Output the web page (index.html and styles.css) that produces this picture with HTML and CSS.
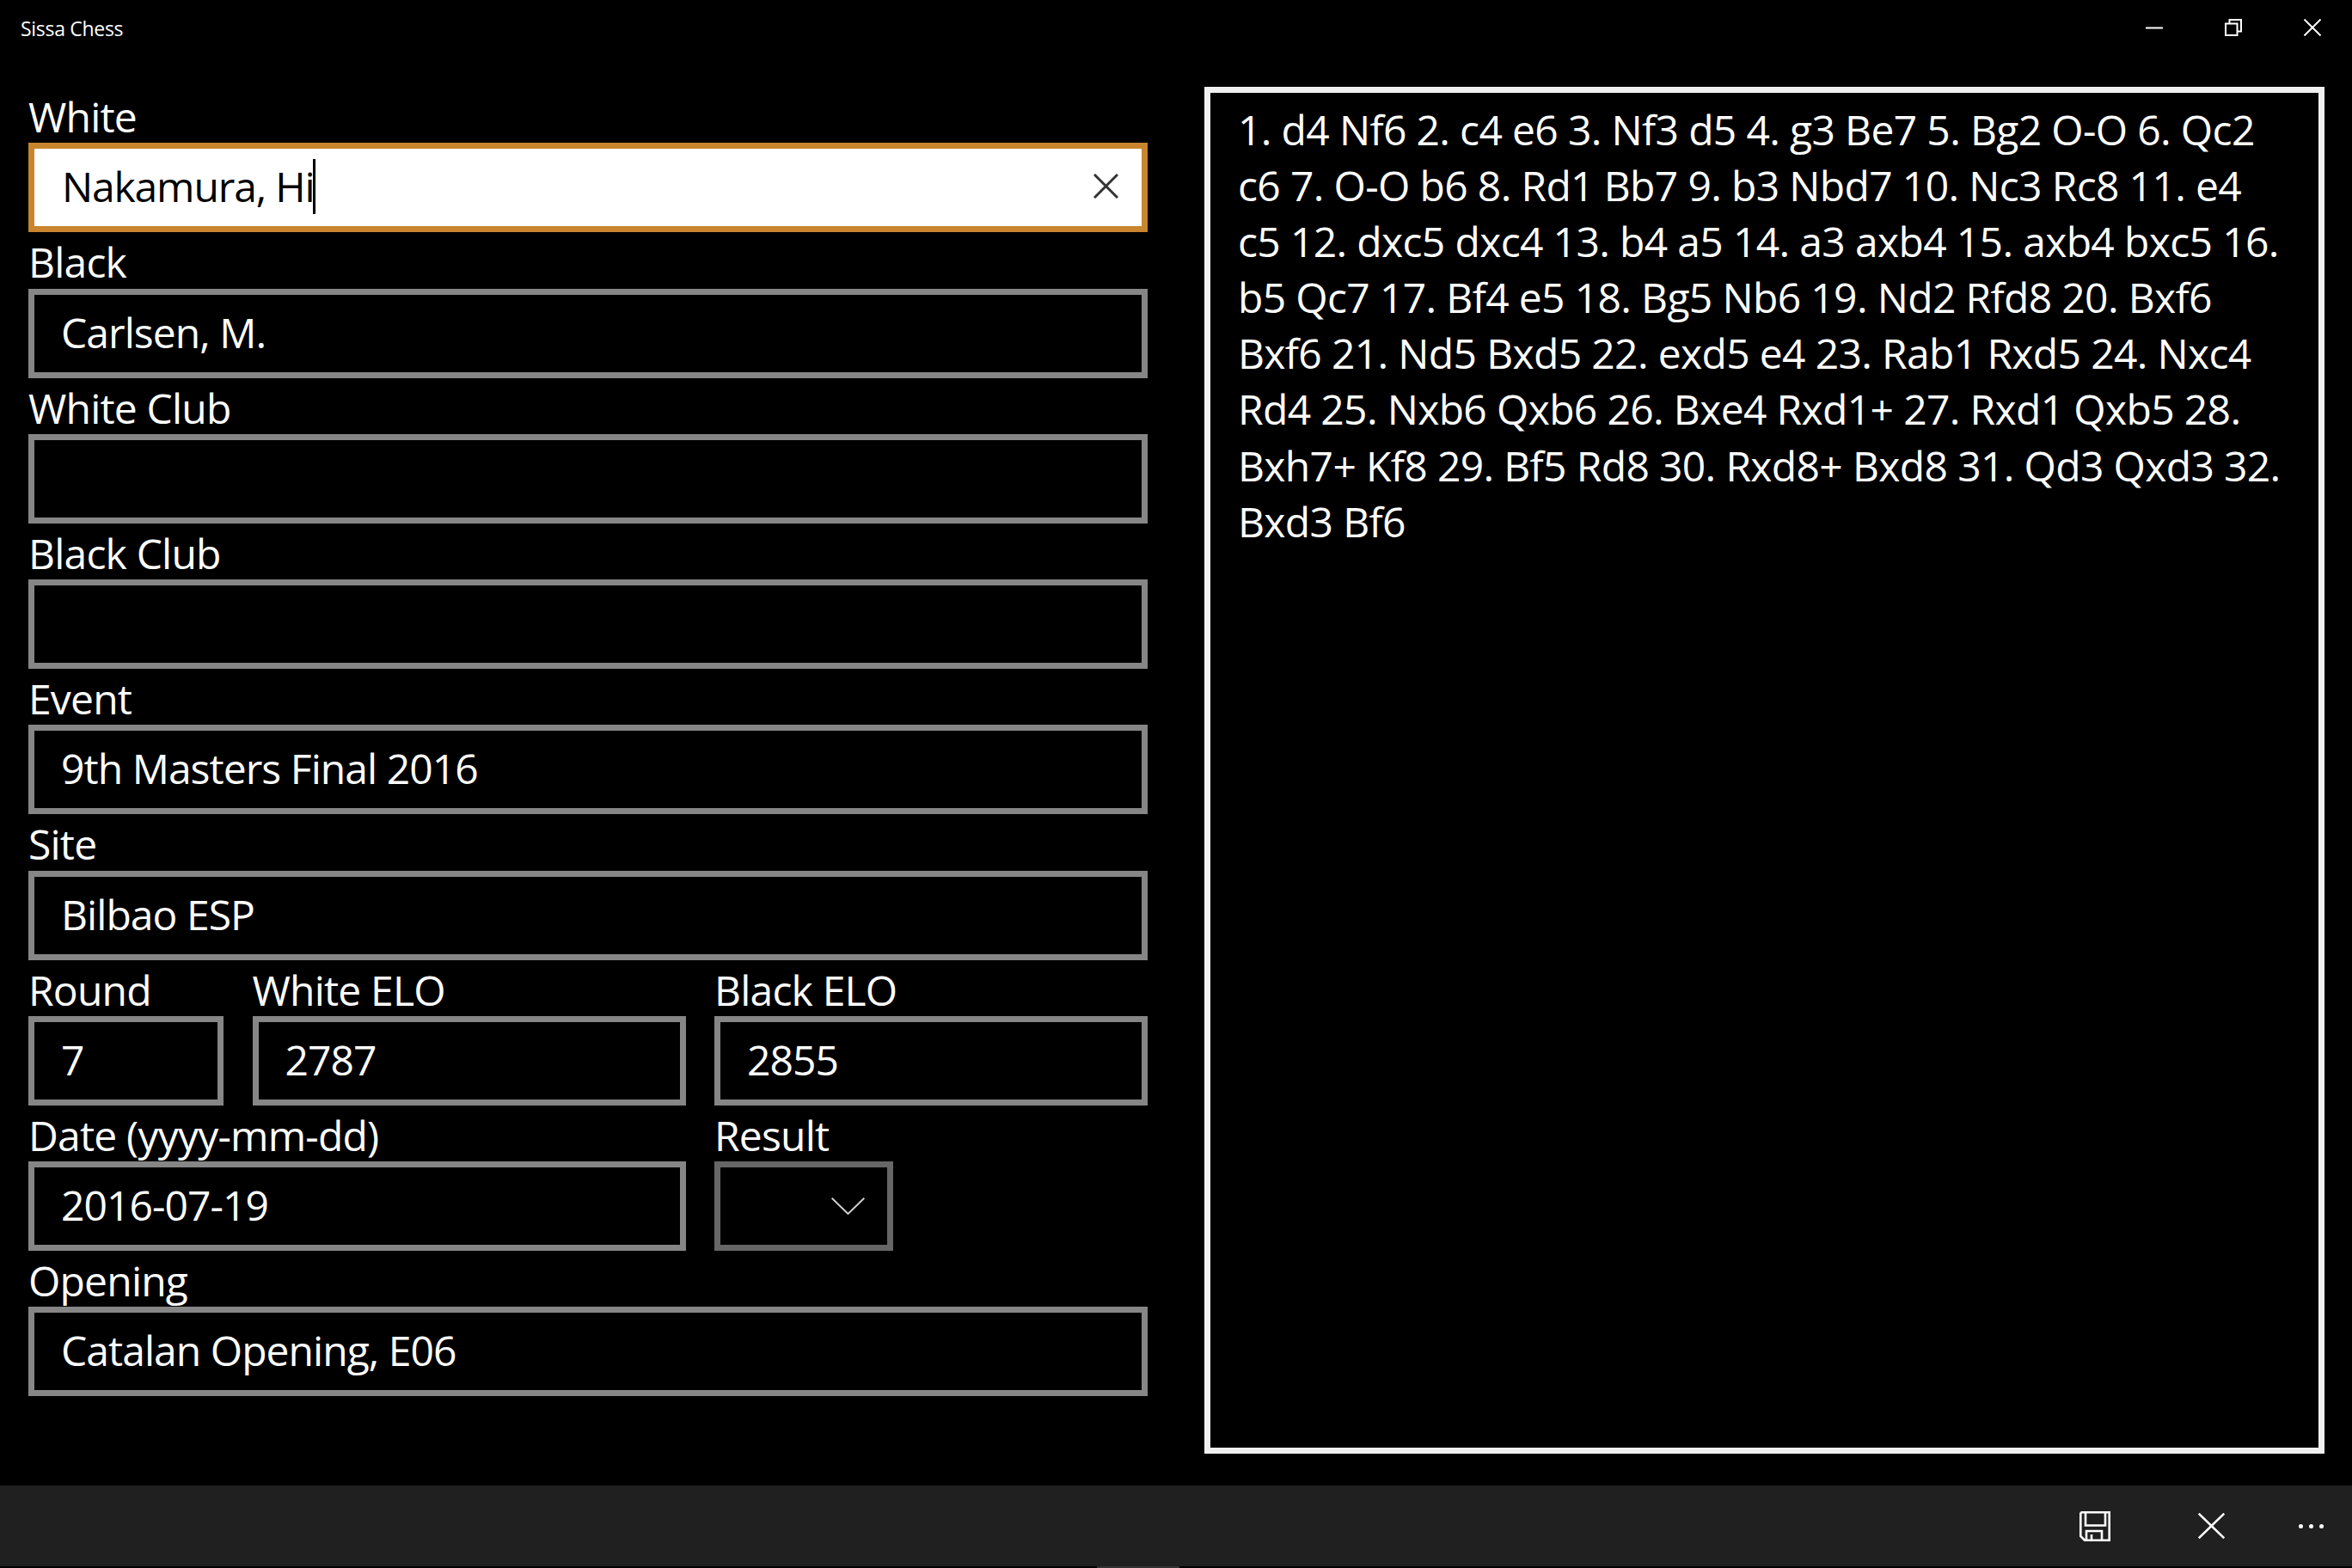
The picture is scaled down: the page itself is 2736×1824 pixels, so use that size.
FILE: index.html
```html
<!DOCTYPE html>
<html lang="en">
<head>
<meta charset="utf-8">
<title>Sissa Chess</title>
<link rel="stylesheet" href="styles.css">
</head>
<body>
<div class="app">
  <header class="titlebar">
    <span class="app-title">Sissa Chess</span>
    <div class="window-controls">
      <svg class="win-icon" viewBox="0 0 20 20"><path d="M0 10.5H20" /></svg>
      <svg class="win-icon" viewBox="0 0 20 20"><path d="M1 5.5H14.5V19H1Z M5.5 5V1H19V14.5H15" /></svg>
      <svg class="win-icon" viewBox="0 0 20 20"><path d="M0.5 0.5L19.5 19.5M19.5 0.5L0.5 19.5" /></svg>
    </div>
  </header>
  <main class="content">
    <form class="form">
      <div class="field span-3">
        <label class="label">White</label>
        <div class="box focused"><span class="value">Nakamura, Hi</span><span class="caret"></span>
          <svg class="clear" viewBox="0 0 29 29"><path d="M1 1L28 28M28 1L1 28" /></svg>
        </div>
      </div>
      <div class="field span-3"><label class="label">Black</label><div class="box"><span class="value">Carlsen, M.</span></div></div>
      <div class="field span-3"><label class="label">White Club</label><div class="box"></div></div>
      <div class="field span-3"><label class="label">Black Club</label><div class="box"></div></div>
      <div class="field span-3"><label class="label">Event</label><div class="box"><span class="value">9th Masters Final 2016</span></div></div>
      <div class="field span-3"><label class="label">Site</label><div class="box"><span class="value">Bilbao ESP</span></div></div>
      <div class="field"><label class="label">Round</label><div class="box"><span class="value">7</span></div></div>
      <div class="field"><label class="label">White ELO</label><div class="box"><span class="value">2787</span></div></div>
      <div class="field"><label class="label">Black ELO</label><div class="box"><span class="value">2855</span></div></div>
      <div class="field span-2"><label class="label">Date (yyyy-mm-dd)</label><div class="box"><span class="value">2016-07-19</span></div></div>
      <div class="field"><label class="label">Result</label>
        <div class="box combo">
          <svg class="chevron" viewBox="0 0 39 20"><path d="M0.7 0.7L19.5 19L38.3 0.7" /></svg>
        </div>
      </div>
      <div class="field span-3"><label class="label">Opening</label><div class="box"><span class="value">Catalan Opening, E06</span></div></div>
    </form>
    <section class="moves">1. d4 Nf6 2. c4 e6 3. Nf3 d5 4. g3 Be7 5. Bg2 O-O 6. Qc2<br>c6 7. O-O b6 8. Rd1 Bb7 9. b3 Nbd7 10. Nc3 Rc8 11. e4<br>c5 12. dxc5 dxc4 13. b4 a5 14. a3 axb4 15. axb4 bxc5 16.<br>b5 Qc7 17. Bf4 e5 18. Bg5 Nb6 19. Nd2 Rfd8 20. Bxf6<br>Bxf6 21. Nd5 Bxd5 22. exd5 e4 23. Rab1 Rxd5 24. Nxc4<br>Rd4 25. Nxb6 Qxb6 26. Bxe4 Rxd1+ 27. Rxd1 Qxb5 28.<br>Bxh7+ Kf8 29. Bf5 Rd8 30. Rxd8+ Bxd8 31. Qd3 Qxd3 32.<br>Bxd3 Bf6</section>
  </main>
  <footer class="commandbar">
    <svg class="cmd-save" viewBox="0 0 36 35"><path d="M2.5 1.3H34.7V33.7H6L1.3 29V2.5Z M7 1.3V16.5H30V1.3 M8 33.7V23H26V33.7 M14 33.7V27" /></svg>
    <svg class="cmd-close" viewBox="0 0 31 30"><path d="M0.7 0.7L30.3 29.3M30.3 0.7L0.7 29.3" /></svg>
    <div class="cmd-more"><span class="dot"></span><span class="dot"></span><span class="dot"></span></div>
  </footer>
  <div class="home-strip"><span class="home-mark"></span></div>
</div>
</body>
</html>
```

FILE: styles.css
```css
* { box-sizing: border-box; }
html, body { margin: 0; padding: 0; background: #000; }
.app {
  width: 2736px;
  height: 1824px;
  display: flex;
  flex-direction: column;
  background: #000;
  color: #fff;
  font-family: "Open Sans", "Noto Sans", sans-serif;
  overflow: hidden;
}
.titlebar {
  height: 101px;
  flex: none;
  display: flex;
  justify-content: space-between;
  align-items: flex-start;
  padding: 22px 36px 0 24px;
}
.app-title { font-size: 23px; line-height: 22px; letter-spacing: -0.3px; }
.window-controls { display: flex; gap: 72px; }
.win-icon { width: 20px; height: 20px; display: block; fill: none; stroke: #fff; stroke-width: 2; }
.content {
  flex: 1;
  display: flex;
  gap: 66px;
  padding-left: 33px;
  min-height: 0;
}
.form {
  width: 1302px;
  flex: none;
  display: grid;
  grid-template-columns: 227px 504px 504px;
  column-gap: 33.5px;
  grid-auto-rows: 169.25px;
  align-content: start;
}
.field { display: flex; flex-direction: column; min-width: 0; }
.span-3 { grid-column: span 3; }
.span-2 { grid-column: span 2; }
.label {
  height: 65.25px;
  padding-top: 2px;
  font-size: 48px;
  line-height: 65px;
  letter-spacing: -0.8px;
  white-space: nowrap;
}
.box {
  height: 104px;
  border: 7px solid #868686;
  background: #000;
  display: flex;
  align-items: center;
  padding: 0 0 3px 31px;
  font-size: 48px;
  letter-spacing: -0.95px;
  position: relative;
}
.value { white-space: nowrap; }
.focused { background: #fff; border-color: #c8852e; color: #000; padding-left: 32px; letter-spacing: -1.15px; }
.caret { width: 3px; height: 64px; background: #000; margin-left: -1px; }
.clear {
  position: absolute;
  right: 27px;
  top: 29px;
  width: 29px;
  height: 29px;
  fill: none;
  stroke: #333;
  stroke-width: 3;
}
.combo { width: 208px; border-color: #666; }
.chevron {
  position: absolute;
  left: 129px;
  top: 35px;
  width: 39px;
  height: 20px;
  fill: none;
  stroke: #ccc;
  stroke-width: 2;
}
.moves {
  width: 1303px;
  height: 1590px;
  flex: none;
  border: 7px solid #f0f0f0;
  padding: 10px 32px;
  font-size: 48px;
  line-height: 65.1px;
  letter-spacing: -0.65px;
  white-space: nowrap;
}
.commandbar {
  height: 94px;
  flex: none;
  background: #202020;
  position: relative;
  display: flex;
  align-items: center;
  justify-content: flex-end;
  padding-right: 33px;
}
.cmd-save { width: 36px; height: 35px; fill: none; stroke: #fff; stroke-width: 2.6; margin-right: 102px; }
.cmd-close { width: 31px; height: 30px; fill: none; stroke: #fff; stroke-width: 2.6; margin-right: 86px; }
.cmd-more { display: flex; gap: 7px; }
.dot { width: 5px; height: 5px; border-radius: 50%; background: #fff; }
.home-strip { height: 2px; flex: none; background: #000; padding-left: 1276px; }
.home-mark { display: block; width: 96px; height: 2px; background: #333; }
```
